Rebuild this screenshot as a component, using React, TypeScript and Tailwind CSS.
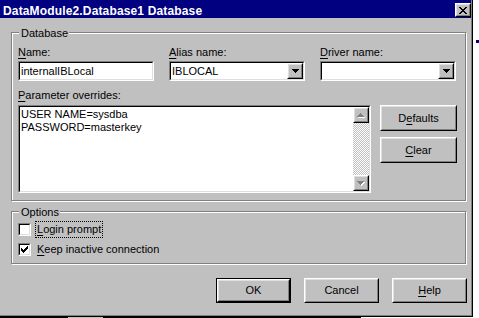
import React from "react";

const FONT = "font-['Liberation_Sans',Arial,sans-serif]";

function U({ children }: { children: React.ReactNode }) {
  return <span className="underline decoration-1 underline-offset-[2px]">{children}</span>;
}

function Sunken({ className = "", innerClassName = "", children }: { className?: string; innerClassName?: string; children?: React.ReactNode }) {
  return (
    <div className={`border border-t-[#808080] border-l-[#808080] border-b-white border-r-white ${className}`}>
      <div className={`h-full w-full border border-t-black border-l-black border-b-[#dfdfdf] border-r-[#dfdfdf] bg-white ${innerClassName}`}>
        {children}
      </div>
    </div>
  );
}

function Raised({ className = "", innerClassName = "", children }: { className?: string; innerClassName?: string; children?: React.ReactNode }) {
  return (
    <div className={`border border-t-white border-l-white border-b-black border-r-black bg-[#c0c0c0] ${className}`}>
      <div className={`h-full w-full border border-t-[#dfdfdf] border-l-[#dfdfdf] border-b-[#808080] border-r-[#808080] flex items-center justify-center ${innerClassName}`}>
        {children}
      </div>
    </div>
  );
}

function DownArrow({ color = "#000" }: { color?: string }) {
  return (
    <svg width="7" height="4" viewBox="0 0 7 4" shapeRendering="crispEdges">
      <rect x="0" y="0" width="7" height="1" fill={color} />
      <rect x="1" y="1" width="5" height="1" fill={color} />
      <rect x="2" y="2" width="3" height="1" fill={color} />
      <rect x="3" y="3" width="1" height="1" fill={color} />
    </svg>
  );
}

function GrayArrow({ up }: { up: boolean }) {
  const rows = up ? [[3, 1], [2, 3], [1, 5], [0, 7]] : [[0, 7], [1, 5], [2, 3], [3, 1]];
  return (
    <svg width="8" height="5" viewBox="0 0 8 5" shapeRendering="crispEdges">
      {rows.map(([x, w], i) => (
        <rect key={"w" + i} x={x + 1} y={i + 1} width={w} height={1} fill="#fff" />
      ))}
      {rows.map(([x, w], i) => (
        <rect key={"g" + i} x={x} y={i} width={w} height={1} fill="#808080" />
      ))}
    </svg>
  );
}

function Check() {
  const rows = ["......#", ".....##", "#...###", "##.###.", "#####..", ".###...", "..#...."];
  return (
    <svg width="7" height="7" viewBox="0 0 7 7" shapeRendering="crispEdges">
      {rows.map((r, y) =>
        r.split("").map((c, x) => (c === "#" ? <rect key={`${x}-${y}`} x={x} y={y} width={1} height={1} fill="#000" /> : null))
      )}
    </svg>
  );
}

function Checkbox({ checked }: { checked?: boolean }) {
  return (
    <Sunken className="w-[13px] h-[13px] shrink-0" innerClassName="flex items-center justify-center">
      {checked ? <Check /> : null}
    </Sunken>
  );
}

function Group({ label, className = "", children }: { label: string; className?: string; children?: React.ReactNode }) {
  return (
    <div className={`relative border border-[#808080] shadow-[inset_1px_1px_0_#fff,1px_1px_0_#fff] ${className}`}>
      <div className="absolute left-[7px] top-[-6px] bg-[#c0c0c0] pl-[2px] pr-[1px] leading-[13px]">{label}</div>
      {children}
    </div>
  );
}

function Button({ children, w = "w-[75px]", h = "h-[25px]", def = false }: { children: React.ReactNode; w?: string; h?: string; def?: boolean }) {
  if (def) {
    return (
      <div className={`border border-black ${w} ${h}`}>
        <Raised className="w-full h-full">{children}</Raised>
      </div>
    );
  }
  return <Raised className={`${w} ${h}`}>{children}</Raised>;
}

function Combo({ value }: { value: string }) {
  return (
    <Sunken className="w-[136px] h-[20px]" innerClassName="flex items-start">
      <div className="flex-1 pl-[1px] pt-[2px] leading-[13px]">{value}</div>
      <Raised className="w-[16px] h-[16px] shrink-0">
        <DownArrow />
      </Raised>
    </Sunken>
  );
}

export default function App() {
  return (
    <div className={`w-[479px] h-[318px] bg-white overflow-hidden ${FONT} text-[11px] leading-[13px] text-black flex flex-col`}>
      <div className="flex">
        <div className="w-[473px] h-[317px] border-r border-b border-black shrink-0">
          <div className="w-full h-full border-r border-b border-[#808080] bg-[#c0c0c0] flex flex-col">
            {/* Title bar */}
            <div className="h-[18px] bg-[#000080] flex items-start justify-between shrink-0">
              <div className="pl-[3px] pt-[5px] text-white font-bold text-[12px] leading-[12px] tracking-[0.15px] whitespace-nowrap">
                DataModule2.Database1 Database
              </div>
              <Raised className="w-[16px] h-[14px] mt-[3px] mr-[0px]">
                <svg width="8" height="7" viewBox="0 0 8 7" shapeRendering="crispEdges">
                  {[0, 1, 2, 3, 4, 5, 6].map((i) => (
                    <React.Fragment key={i}>
                      <rect x={i} y={i} width={2} height={1} fill="#000" />
                      <rect x={6 - i} y={i} width={2} height={1} fill="#000" />
                    </React.Fragment>
                  ))}
                </svg>
              </Raised>
            </div>

            {/* Database group */}
            <Group label="Database" className="ml-[11px] mt-[14px] w-[455px] h-[169px] shrink-0">
              <div className="pl-[6px] pt-[13px] flex flex-col">
                <div className="flex gap-[15px]">
                  <div className="flex flex-col w-[136px]">
                    <div className="h-[13px]"><U>N</U>ame:</div>
                    <Sunken className="mt-[2px] w-[136px] h-[20px]">
                      <div className="pl-[1px] pt-[2px] leading-[13px]">internalIBLocal</div>
                    </Sunken>
                  </div>
                  <div className="flex flex-col w-[136px]">
                    <div className="h-[13px]"><U>A</U>lias name:</div>
                    <div className="mt-[2px]"><Combo value="IBLOCAL" /></div>
                  </div>
                  <div className="flex flex-col w-[136px]">
                    <div className="h-[13px]"><U>D</U>river name:</div>
                    <div className="mt-[2px]"><Combo value="" /></div>
                  </div>
                </div>
                <div className="mt-[8px] h-[13px]"><U>P</U>arameter overrides:</div>
                <div className="mt-[3px] flex items-start">
                  <Sunken className="w-[353px] h-[88px]" innerClassName="flex">
                    <div className="flex-1 pl-[1px] pt-[1px] leading-[13px]">
                      <div>USER NAME=sysdba</div>
                      <div>PASSWORD=masterkey</div>
                    </div>
                    <div className="w-[16px] flex flex-col shrink-0">
                      <Raised className="w-[16px] h-[16px]">
                        <GrayArrow up />
                      </Raised>
                      <div className="flex-1 bg-[image:repeating-conic-gradient(#c0c0c0_0_25%,#ffffff_0_50%)] bg-[length:2px_2px]" />
                      <Raised className="w-[16px] h-[16px]">
                        <GrayArrow up={false} />
                      </Raised>
                    </div>
                  </Sunken>
                  <div className="ml-[9px] flex flex-col gap-[6px]">
                    <Button w="w-[77px]" h="h-[26px]">D<U>e</U>faults</Button>
                    <Button w="w-[77px]" h="h-[26px]"><U>C</U>lear</Button>
                  </div>
                </div>
              </div>
            </Group>

            {/* Options group */}
            <Group label="Options" className="ml-[11px] mt-[10px] w-[455px] h-[53px] shrink-0">
              <div className="pl-[6px] pt-[11px] flex flex-col gap-[7px]">
                <div className="flex items-start">
                  <Checkbox />
                  <span className="ml-[4px] -my-[2px] border border-dotted border-black px-[1px] py-[1px] leading-[13px]">
                    <U>L</U>ogin prompt
                  </span>
                </div>
                <div className="flex items-start">
                  <Checkbox checked />
                  <span className="ml-[6px] leading-[13px]">
                    <U>K</U>eep inactive connection
                  </span>
                </div>
              </div>
            </Group>

            {/* Bottom buttons */}
            <div className="mt-[14px] flex justify-end gap-[13px] pr-[4px]">
              <Button def>OK</Button>
              <Button>Cancel</Button>
              <Button><U>H</U>elp</Button>
            </div>
          </div>
        </div>
        <div className="flex-1 relative">
          <div className="mt-[40px] ml-[3px] w-[3px] h-[3px] bg-[#000080]" />
        </div>
      </div>
      <div className="h-[1px] flex">
        <div className="w-[68px] bg-black" />
        <div className="w-[35px] bg-[#c0c0c0]" />
        <div className="w-[258px] bg-black" />
      </div>
    </div>
  );
}
